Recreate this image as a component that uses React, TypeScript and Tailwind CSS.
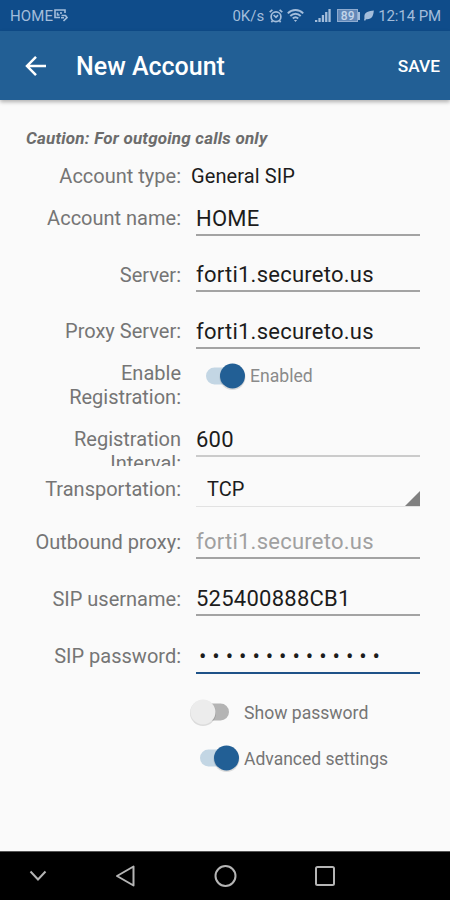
import clsx from 'clsx'
import type { ReactNode } from 'react'

function StatusBar() {
  return (
    <div className="flex h-[31px] items-center bg-[#0f4c8a] pl-[10px] pr-[9px] text-[15px] leading-[32px] text-[#a3bddb]">
      <span className="tracking-[0.15px]">HOME</span>
      <svg className="ml-[1px]" width="14" height="13" viewBox="0 0 14 13" fill="none" stroke="currentColor" strokeWidth="1.6">
        <path d="M3 8.5H1V1h10v3M3.5 3.5v2.500h2M7 3v2M1 8.500h5" />
        <path d="M7.500 6.500h4l1.500 2-3.500 3.500M7 8.800h3" />
      </svg>
      <span className="ml-auto">0K/s</span>
      <svg className="ml-[5px]" width="14" height="14" viewBox="0 0 14 14" fill="none" stroke="currentColor" strokeWidth="1.700">
        <circle cx="7" cy="7.700" r="4.900" />
        <path d="M.7 3.200 3.400.9M13.300 3.200 10.600.9M4.600 6l2.400 2.300L9 6.200M3.400 11.800l-1 1.400M10.600 11.800l1 1.400" />
      </svg>
      <svg className="ml-[4px]" width="17" height="14" viewBox="0 0 17 14" fill="none" stroke="currentColor" strokeWidth="1.900">
        <path d="M.8 4.400C5-.1 12-.1 16.200 4.400M3.300 7c3-3 7.400-3 10.400 0M5.800 9.500c1.600-1.500 3.800-1.500 5.400 0" />
        <path d="m6.900 11 1.600 2 1.600-2z" fill="currentColor" stroke="none" />
      </svg>
      <svg className="ml-[11px]" width="16" height="13" viewBox="0 0 16 13" fill="currentColor">
        <path d="M0 11h2.300v2H0zM3.400 9h2.300v4H3.400zM6.800 6h2.300v7H6.800zM10.100 3h2.300v10h-2.300zM13.400 0h2.300v13h-2.300z" />
      </svg>
      <div className="ml-[6px] flex h-[13px] w-[21px] items-center justify-center border border-[#8eabd0] bg-[#6288b8] text-[12px] font-medium leading-none text-[#c3d5ea]">
        89
      </div>
      <div className="h-[8px] w-[2px] bg-[#a3bddb]" />
      <svg className="ml-[4px]" width="10" height="11" viewBox="0 0 10 11" fill="currentColor">
        <path d="M9.800.5C4.500.8-.5 2.500.5 8L0 10.300l1.200.4.8-1.500C8 9.800 9.500 5.500 9.800.5z" />
      </svg>
      <span className="ml-[4px] tracking-[-0.1px]">12:14 PM</span>
    </div>
  )
}

function AppBar() {
  return (
    <header className="flex h-[69px] items-center bg-[#225f95] pl-[25px] pr-[10px] text-white shadow-[0_2px_4px_rgba(0,0,0,0.3)]">
      <svg width="22" height="22" viewBox="0 0 22 22" fill="none" stroke="currentColor" strokeWidth="2.500">
        <path d="M21 11H2.500M11 1.800 2 11l9 9.200" />
      </svg>
      <h1 className="ml-[29px] pt-[2px] text-[25px] font-medium leading-[32px]">New Account</h1>
      <button className="ml-auto pt-[2px] text-[17.3px] font-medium">SAVE</button>
    </header>
  )
}

function Row({ label, className, children }: { label: string; className: string; children: ReactNode }) {
  return (
    <div className={clsx('flex', className)}>
      <div className="mr-px w-[155px] shrink-0 overflow-hidden text-right text-[20px] leading-[24px] text-[#757575]">
        {label}
      </div>
      {children}
    </div>
  )
}

const fieldTones = {
  normal: 'border-[#a3a3a3] text-[#1c1c1c]',
  light: 'border-[#cbcbcb] text-[#1c1c1c]',
  hint: 'border-[#a3a3a3] text-[#a0a0a0]',
  focused: 'border-[#1e5288] pl-[3px] text-[#1c1c1c] tracking-[5.93px]',
}

function Field({
  value,
  tone = 'normal',
  className = '-mt-[2px]',
}: {
  value: string
  tone?: keyof typeof fieldTones
  className?: string
}) {
  return (
    <div
      className={clsx(
        'ml-[14px] h-[32px] w-[224px] whitespace-nowrap border-b-2 text-[22px] leading-[29px]',
        tone !== 'focused' && 'tracking-[0.25px]',
        fieldTones[tone],
        className,
      )}
    >
      {value}
    </div>
  )
}

function Switch({ on }: { on: boolean }) {
  return (
    <svg width="42" height="30" viewBox="0 0 42 30">
      <rect x="2" y="6.500" width="37" height="17" rx="8.500" fill={on ? '#c3d6e4' : '#b4b4b4'} />
      <circle cx={on ? 28.5 : 13} cy="16" r="13" fill="#000" opacity=".12" />
      <circle cx={on ? 28.5 : 13} cy="15" r="12.500" fill={on ? '#225f95' : '#ececec'} />
    </svg>
  )
}

function NavBar() {
  return (
    <nav className="flex h-[49px] items-center border-t border-[#555] bg-black text-[#b5b5b5]">
      <svg width="450" height="48" viewBox="0 0 450 48" fill="none" stroke="currentColor" strokeWidth="2">
        <path d="m30.500 19.500 7.500 8 7.500-8" />
        <path d="M133.500 14.500v19L117 24z" strokeLinejoin="round" />
        <circle cx="225.500" cy="24" r="10" />
        <rect x="316" y="15" width="18" height="18" rx="1.500" />
      </svg>
    </nav>
  )
}

export default function App() {
  return (
    <div className="flex h-[900px] w-[450px] flex-col overflow-hidden bg-[#fafafa] font-['Roboto',sans-serif]">
      <StatusBar />
      <AppBar />
      <main className="flex flex-1 flex-col pl-[26px]">
        <p className="mt-[26px] h-[38px] text-[17px] font-bold italic leading-[24px] tracking-[0.21px] text-[#6c6c6c]">
          Caution: For outgoing calls only
        </p>
        <Row label="Account type:" className="h-[40px]">
          <div className="ml-[9px] text-[20px] leading-[24px] tracking-[0.1px] text-[#1c1c1c]">General SIP</div>
        </Row>
        <Row label="Account name:" className="h-[57px] pt-[2px]">
          <Field value="HOME" />
        </Row>
        <Row label="Server:" className="h-[56px] pt-[2px]">
          <Field value="forti1.secureto.us" className="-mt-[3px]" />
        </Row>
        <Row label="Proxy Server:" className="h-[44px] pt-[2px]">
          <Field value="forti1.secureto.us" />
        </Row>
        <Row label="Enable Registration:" className="h-[66px]">
          <div className="ml-[22px] flex h-[30px] items-center text-[17.6px] text-[#8a8a8a]">
            <Switch on />
            <span className="ml-[4px]">Enabled</span>
          </div>
        </Row>
        <Row label="Registration Interval:" className="h-[39px]">
          <Field value="600" tone="light" />
        </Row>
        <Row label="Transportation:" className="h-[62px] pt-[11px]">
          <div className="ml-[14px] flex h-[30px] w-[224px] items-end justify-between border-b border-[#e2e2e2]">
            <span className="ml-[11px] self-start text-[20px] leading-[25px] text-[#1c1c1c]">TCP</span>
            <svg width="15" height="15" viewBox="0 0 15 15" fill="#808080">
              <path d="M15 0v15H0z" />
            </svg>
          </div>
        </Row>
        <Row label="Outbound proxy:" className="h-[57px] pt-[2px]">
          <Field value="forti1.secureto.us" tone="hint" className="-mt-[3px]" />
        </Row>
        <Row label="SIP username:" className="h-[57px] pt-[2px]">
          <Field value="525400888CB1" className="-mt-[3px]" />
        </Row>
        <Row label="SIP password:" className="h-[55px] pt-[2px]">
          <Field value="••••••••••••••" tone="focused" />
        </Row>
        <div className="ml-[164px] flex h-[30px] items-center text-[17.6px] text-[#757575]">
          <Switch on={false} />
          <span className="ml-[12px] pt-[2px]">Show password</span>
        </div>
        <div className="ml-[172px] mt-[16px] flex h-[30px] items-center text-[17.500px] text-[#757575]">
          <Switch on />
          <span className="ml-[4px] pt-[2px]">Advanced settings</span>
        </div>
      </main>
      <NavBar />
    </div>
  )
}
